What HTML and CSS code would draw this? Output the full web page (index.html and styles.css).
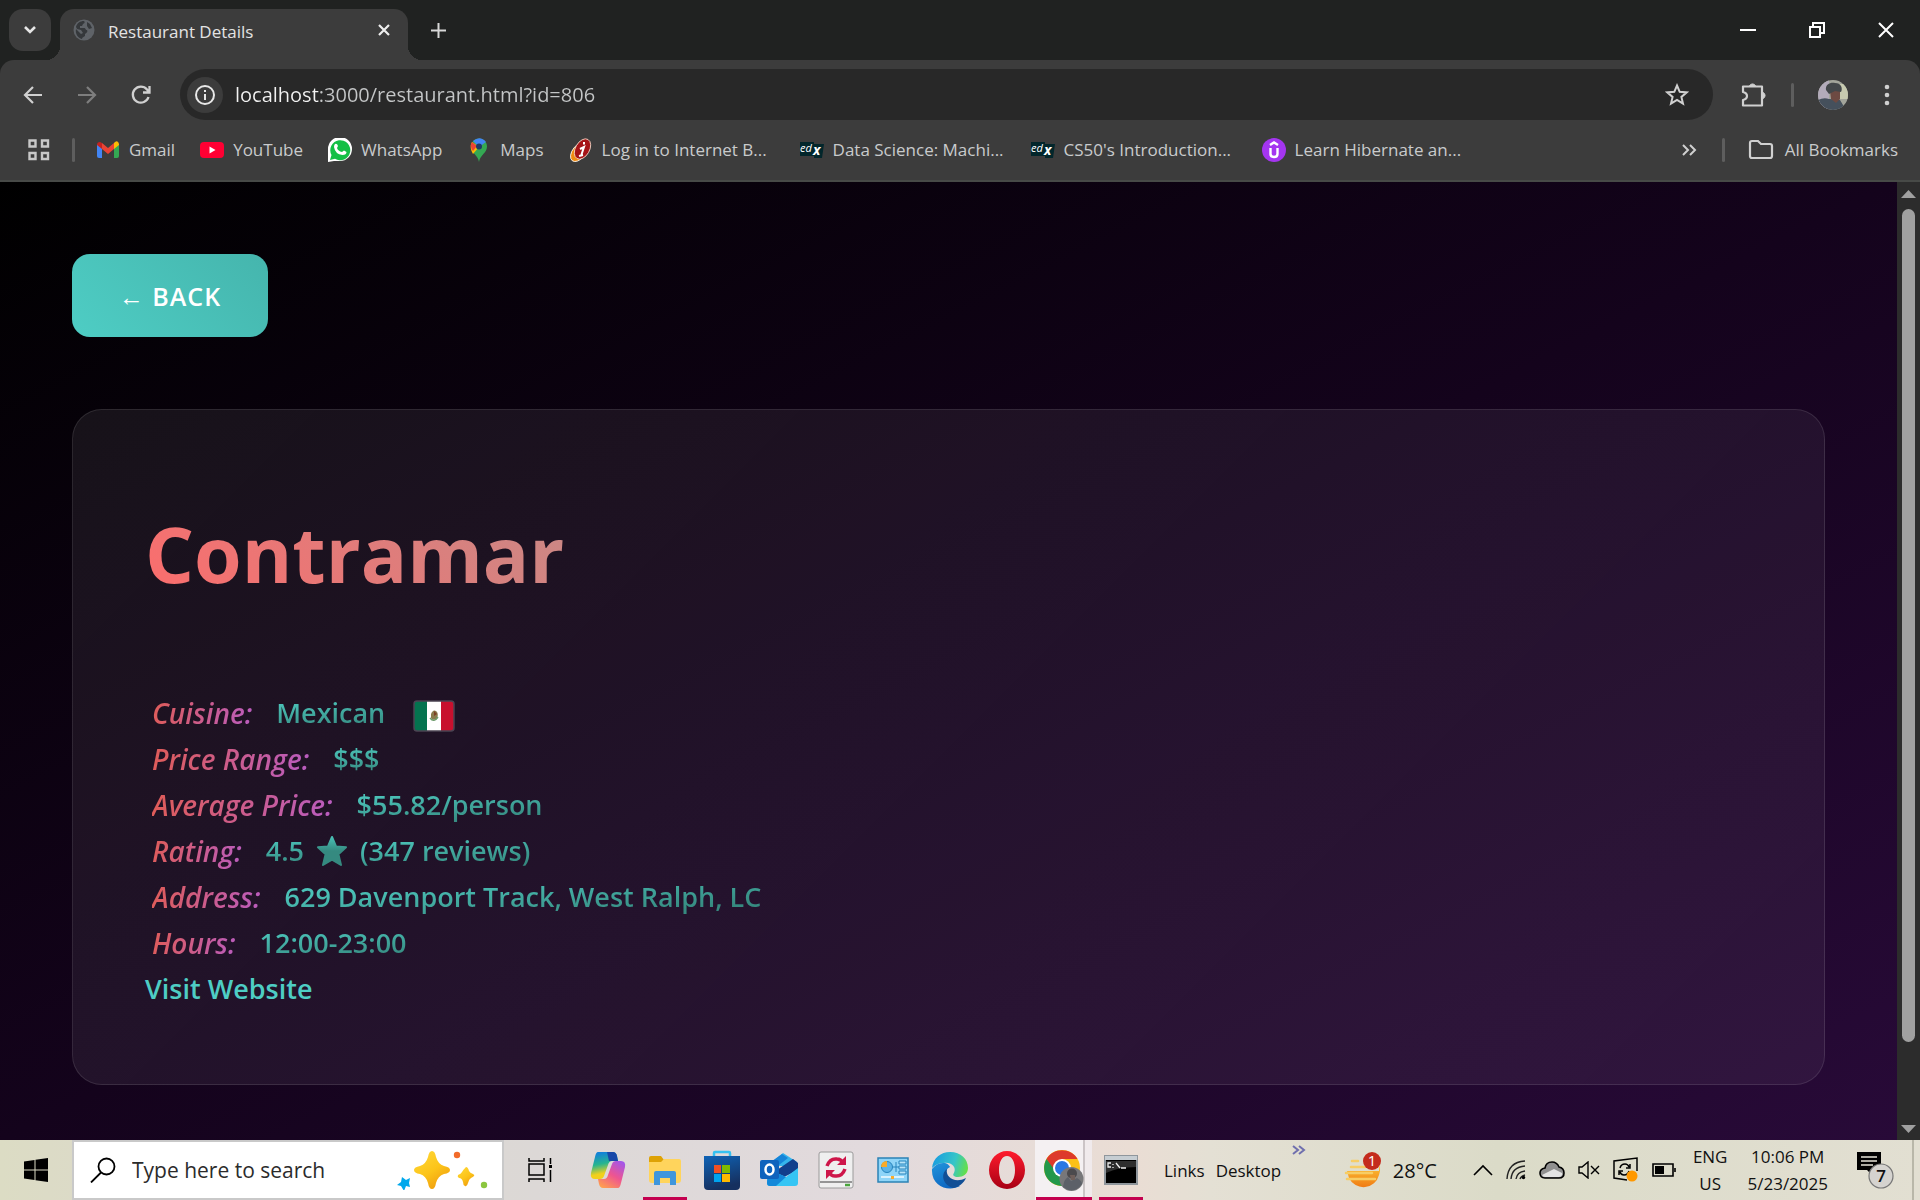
FILE: index.html
```html
<!DOCTYPE html>
<html lang="en">
<head>
<meta charset="utf-8">
<title>Restaurant Details</title>
<link rel="stylesheet" href="styles.css">
</head>
<body>
<header class="browser">
  <div class="tabstrip">
    <button class="tab-search" aria-label="Search tabs"><svg width="14" height="10" viewBox="0 0 14 10"><path d="M2 2l5 5 5-5" fill="none" stroke="#e6e6e6" stroke-width="2.6"/></svg></button>
    <div class="tab">
      <svg width="22" height="22" viewBox="0 0 22 22"><circle cx="11" cy="11" r="10.5" fill="#5f6368"/><path d="M3 8c1-4 4-6 8-6 1 1 1 2-1 3l-1 2H7v2h4c2 0 1 2 3 2 1 1 0 3-2 4v2c-1 1-3 1-3 3-4-1-7-5-6-10l5 5 2-1-2-3-4-1zM14 3l3 2 2 4-3 1-2-3z" fill="#35383b"/></svg>
      <span class="tab-title">Restaurant Details</span>
      <button class="tab-close" aria-label="Close tab"><svg width="14" height="14" viewBox="0 0 14 14"><path d="M2 2l10 10M12 2L2 12" stroke="#eee" stroke-width="2.2"/></svg></button>
    </div>
    <button class="new-tab" aria-label="New tab"><svg width="17" height="17" viewBox="0 0 17 17"><path d="M8.500 1v15M1 8.500h15" stroke="#d8d8d8" stroke-width="2"/></svg></button>
    <div class="window-controls">
      <button aria-label="Minimize"><svg width="16" height="16" viewBox="0 0 16 16"><path d="M0 8h16" stroke="#fff" stroke-width="2"/></svg></button>
      <button aria-label="Restore"><svg width="16" height="16" viewBox="0 0 16 16"><path d="M1 5h10v10H1zM4 4V1h11v10h-3" fill="none" stroke="#fff" stroke-width="2"/></svg></button>
      <button aria-label="Close"><svg width="16" height="16" viewBox="0 0 16 16"><path d="M1 1l14 14M15 1L1 15" stroke="#fff" stroke-width="2"/></svg></button>
    </div>
  </div>

  <div class="toolbar">
    <div class="nav">
      <button aria-label="Back"><svg width="20" height="20" viewBox="0 0 20 20"><path d="M19 10H2M10 2L2 10l8 8" fill="none" stroke="#d0d0d0" stroke-width="2.2"/></svg></button>
      <button aria-label="Forward"><svg width="20" height="20" viewBox="0 0 20 20"><path d="M1 10h17M10 2l8 8-8 8" fill="none" stroke="#7e7e7e" stroke-width="2.2"/></svg></button>
      <button aria-label="Reload"><svg width="20" height="20" viewBox="0 0 20 20"><path d="M17.500 12A8 8 0 1 1 16 4.500L18 7M18.500 1v6.500H12" fill="none" stroke="#d0d0d0" stroke-width="2.3"/></svg></button>
    </div>
    <div class="omnibox">
      <button class="site-info" aria-label="Site information"><svg width="22" height="22" viewBox="0 0 22 22"><circle cx="11" cy="11" r="9" fill="none" stroke="#e8e8e8" stroke-width="2"/><path d="M11 10v6M11 6v2" stroke="#e8e8e8" stroke-width="2"/></svg></button>
      <input class="url" type="text" aria-label="Address" value="localhost:3000/restaurant.html?id=806">
      <button aria-label="Bookmark this page"><svg width="24" height="24" viewBox="0 0 24 24"><path d="M12 2.500l2.700 6.300 6.900.6-5.200 4.500 1.600 6.700-6-3.600-6 3.600 1.600-6.700-5.200-4.500 6.900-.6z" fill="none" stroke="#d0d0d0" stroke-width="2"/></svg></button>
    </div>
    <button class="ext" aria-label="Extensions"><svg width="26" height="26" viewBox="0 0 26 26"><path d="M2 4.500h19v19H2v-5.500q4-1 4-4t-4-4z" fill="none" stroke="#d0d0d0" stroke-width="2.200" stroke-linejoin="round"/><path d="M8.500 4a3.200 3.200 0 0 1 6 0zM22 10.500a3.200 3.200 0 0 1 0 6z" fill="#d0d0d0" stroke="#d0d0d0"/></svg></button>
    <span class="rule"></span>
    <button class="profile" aria-label="Profile"><svg width="30" height="30" viewBox="0 0 30 30"><defs><clipPath id="av"><circle cx="15" cy="15" r="15"/></clipPath></defs><g clip-path="url(#av)"><path d="M0 0h30v30H0z" fill="#a3a59b"/><path d="M0 0h11v30H0z" fill="#b3abba"/><path d="M21 4h9v15h-9z" fill="#c7cab0"/><path d="M0 20q6-3 11-1 7 0 11 1l6 10H2z" fill="#45505c"/><path d="M12 11h10l0 8-4 4-5-4z" fill="#6d4a42"/><path d="M8 10c-1-6 5-8 9-7 6 0 8 5 6 9l-6-1-6 3z" fill="#43474a"/></g></svg></button>
    <button class="menu" aria-label="Menu"><svg width="6" height="24" viewBox="0 0 6 24"><g fill="#d0d0d0"><circle cx="3" cy="4" r="2.300"/><circle cx="3" cy="12" r="2.300"/><circle cx="3" cy="20" r="2.300"/></g></svg></button>
  </div>

  <nav class="bookmarks">
    <button class="apps" aria-label="Apps"><svg width="22" height="22" viewBox="0 0 22 22"><path d="M1.500 1.500h6v6h-6zM14 1.500h6v6h-6zM1.500 14h6v6h-6zM14 14h6v6h-6z" fill="none" stroke="#c8c8c8" stroke-width="2.400"/></svg></button>
    <span class="rule"></span>
    <div class="marks">
      <a href="#"><svg width="24" height="24" viewBox="0 0 24 24"><path d="M1 6v12q0 2 2 2h3V9z" fill="#4285f4"/><path d="M18 9v11h3q2 0 2-2V6z" fill="#34a853"/><path d="M18 5v6l5-4V6q-1-4-4-2z" fill="#fbbc04"/><path d="M6 5l6 5 6-5v6l-6 5-6-5z" fill="#ea4335"/><path d="M1 7l5 4V5L4 4Q1 4 1 7z" fill="#c5221f"/></svg><span>Gmail</span></a>
      <a href="#"><svg width="24" height="24" viewBox="0 0 24 24"><rect y="4" width="24" height="16" rx="4" fill="#ff0033"/><path d="M9.500 8.500v7l6-3.500z" fill="#fff"/></svg><span>YouTube</span></a>
      <a href="#"><svg width="24" height="24" viewBox="0 0 24 24"><path d="M0 24V11a12 12 0 1 1 12 12H6z" fill="#fff"/><path d="M2 22l1.500-5A10 10 0 1 1 7 20.700z" fill="#13bf45"/><path d="M7 6q2-1 3 2l-1 2q1 3 5 4l2-1.500 2.500 1.500q0 3-4 3Q7 16 6 9 6 7 7 6z" fill="#fff"/></svg><span>WhatsApp</span></a>
      <a href="#"><svg width="24" height="24" viewBox="0 0 24 24"><path d="M4 8.500C4 4 8 .5 12 .5c4.500 0 8 3.500 8 8C20 15 13 17 12 24 11 17 4 15 4 8.500z" fill="#34a853"/><path d="M5 4l7 5-6 7Q2 9 5 4z" fill="#fbbc04"/><path d="M5 4l5 4-4 5Q2 8 5 4z" fill="#ea4335"/><path d="M6 3q7-6 13 1l-7 5z" fill="#4285f4"/><circle cx="12" cy="8.500" r="3" fill="#1f3a66"/></svg><span>Maps</span></a>
      <a href="#" class="long"><svg width="24" height="24" viewBox="0 0 24 24"><ellipse cx="10" cy="14" rx="6.500" ry="11" transform="rotate(38 10 14)" fill="#f08a10" stroke="#fff" stroke-width=".8"/><ellipse cx="13.500" cy="11" rx="7" ry="11" transform="rotate(30 13.500 11)" fill="#a51417" stroke="#f5d9c8" stroke-width=".8"/><path d="M11 11l4-2-3 9M10 18l4-1M15 4v2.500" fill="none" stroke="#fff" stroke-width="2"/></svg><span>Log in to Internet B...</span></a>
      <a href="#" class="long"><svg width="24" height="24" viewBox="0 0 24 24"><path d="M0 4h14v2h10l-2 14h-8v-2H0z" fill="#02262b"/><text x="0" y="14" class="edx">ed</text><text x="13" y="17" class="edx big">x</text></svg><span>Data Science: Machi...</span></a>
      <a href="#" class="long"><svg width="24" height="24" viewBox="0 0 24 24"><path d="M0 4h14v2h10l-2 14h-8v-2H0z" fill="#02262b"/><text x="0" y="14" class="edx">ed</text><text x="13" y="17" class="edx big">x</text></svg><span>CS50's Introduction...</span></a>
      <a href="#" class="long"><svg width="24" height="24" viewBox="0 0 24 24"><circle cx="12" cy="12" r="12" fill="#a435f0"/><path d="M8 7l4-2.500L16 7M8.500 10v6q0 3 3.500 3t3.500-3v-6" fill="none" stroke="#fff" stroke-width="2.400"/></svg><span>Learn Hibernate an...</span></a>
    </div>
    <button class="more" aria-label="More bookmarks"><svg width="16" height="14" viewBox="0 0 16 14"><path d="M2 2l5 5-5 5M9 2l5 5-5 5" fill="none" stroke="#d0d0d0" stroke-width="2"/></svg></button>
    <span class="rule"></span>
    <a href="#" class="all"><svg width="26" height="22" viewBox="0 0 26 22"><path d="M2 4q0-2 2-2h6l3 3h9q2 0 2 2v10q0 2-2 2H4q-2 0-2-2z" fill="none" stroke="#d0d0d0" stroke-width="2.200"/></svg><span>All Bookmarks</span></a>
  </nav>
</header>

<div class="viewport">
  <main class="page">
    <button class="back">← BACK</button>
    <article class="card">
      <h1><span>Contramar</span></h1>
      <p class="row"><em>Cuisine:</em><span class="value">Mexican</span><svg class="flag" width="42" height="32" viewBox="0 0 42 32"><defs><clipPath id="fl"><rect x="1" y="1" width="40" height="30" rx="3"/></clipPath></defs><g clip-path="url(#fl)"><path d="M0 0h42v32H0z" fill="#fff"/><path d="M0 0h14v32H0z" fill="#04734f"/><path d="M28 0h14v32H28z" fill="#c8102e"/></g><path d="M18 14q2-5 5-3t1 8q-5 2-6-1z" fill="#8a7a4d"/><path d="M17 18q4 5 8-1" fill="none" stroke="#6c9b6b" stroke-width="1.500"/><path d="M21 11l3 3-3 2z" fill="#7b3f25"/><rect x="1" y="1" width="40" height="30" rx="3" fill="none" stroke="#4b4352" stroke-width="1.500"/></svg></p>
      <p class="row"><em>Price Range:</em><span class="value">$$$</span></p>
      <p class="row"><em>Average Price:</em><span class="value">$55.82/person</span></p>
      <p class="row"><em>Rating:</em><span class="value">4.5</span><svg class="star" width="32" height="32" viewBox="0 0 32 32"><defs><linearGradient id="sg" x2="0" y2="1"><stop stop-color="#4abfb5"/><stop offset=".5" stop-color="#358a80"/></linearGradient></defs><path d="M16 2l4 9.500 10 .8-7.600 7L25 30l-9-5.300L7 30l2.600-10.700-7.600-7 10-.8z" fill="url(#sg)" stroke="url(#sg)" stroke-width="2" stroke-linejoin="round"/></svg><span class="value">(347 reviews)</span></p>
      <p class="row"><em>Address:</em><span class="value">629 Davenport Track, West Ralph, LC</span></p>
      <p class="row"><em>Hours:</em><span class="value">12:00-23:00</span></p>
      <a class="visit" href="#">Visit Website</a>
    </article>
  </main>
  <div class="scrollbar">
    <svg width="15" height="8" viewBox="0 0 15 8"><path d="M7.500 0L15 8H0z" fill="#a0a0a0"/></svg>
    <span class="track"><span class="thumb"></span></span>
    <svg width="15" height="8" viewBox="0 0 15 8"><path d="M0 0h15L7.500 8z" fill="#a0a0a0"/></svg>
  </div>
</div>

<footer class="taskbar">
  <button class="start" aria-label="Start"><svg width="24" height="24" viewBox="0 0 24 24"><path d="M0 3.500l10.500-1.600v9.500H0zM11.500 1.700L24 0v11.400H11.500zM0 12.500h10.500V22L0 20.500zM11.500 12.500H24V24l-12.500-1.800z"/></svg></button>
  <label class="search">
    <svg width="26" height="26" viewBox="0 0 26 26"><circle cx="16.500" cy="9.500" r="8" fill="none" stroke="#000" stroke-width="1.800"/><path d="M11 15.500L1 25.500" stroke="#000" stroke-width="1.800"/></svg>
    <input type="search" placeholder="Type here to search" aria-label="Type here to search">
    <svg width="94" height="40" viewBox="0 0 94 40"><defs><linearGradient id="gold" x2=".6" y2="1"><stop stop-color="#ffd93b"/><stop offset=".6" stop-color="#fcc419"/><stop offset="1" stop-color="#f0a010"/></linearGradient></defs><path d="M36 1q3 0 4 6 2 7 8 9 6 1 6 4t-6 4q-6 2-8 9-1 6-4 6t-4-6q-2-7-8-9-6-1-6-4t6-4q6-2 8-9 1-6 4-6z" fill="url(#gold)"/><path d="M70 17q2 0 3 4 1 2 4 3 2 1 1 2t-3 2-3 5-3 3-2-4q-1-4-4-4-2-1-1-3 3-1 4-3t4-5z" fill="url(#gold)"/><path d="M6 27l4 3 4-2-1 5 1 4-4-1-2 5-3-5-4-1 4-3z" fill="#00a8ec"/><circle cx="61" cy="5" r="3.200" fill="#f26b2a"/><circle cx="88" cy="35" r="3.200" fill="#8bc63f"/></svg>
  </label>
  <button class="slot view" aria-label="Task view"><svg width="26" height="26" viewBox="0 0 26 26"><path d="M2 1v3h15V1M2 25v-3h15v3M2 7h15v11H2zM23.500 1v6M23.500 13v12" fill="none" stroke="#000" stroke-width="1.500"/><path d="M22 8h3v3h-3z"/></svg></button>
  <div class="apps-row">
    <button class="slot" aria-label="Copilot"><svg width="38" height="38" viewBox="0 0 38 38"><defs><linearGradient id="c1" x2=".2" y2="1"><stop offset=".1" stop-color="#1282d8"/><stop offset=".5" stop-color="#27b58f"/><stop offset=".85" stop-color="#f2d01c"/></linearGradient><linearGradient id="c2" x1=".8" x2=".2" y2="1"><stop stop-color="#a456e8"/><stop offset=".5" stop-color="#ee5590"/><stop offset="1" stop-color="#ff9e50"/></linearGradient></defs><path d="M9 1h15q3 0 4 4l1 5h-6q-3 0-4 4l-4 11q-1 3-4 3H6q-5 0-4-6L6 6q1-5 3-5z" fill="url(#c1)"/><path d="M18 1h6q3 0 4 4l1 5h-9z" fill="#1748a8"/><path d="M29 37H14q-3 0-4-4l-1-5h6q3 0 4-4l4-11q1-3 4-3h5q5 0 4 6l-4 16q-1 5-3 5z" fill="url(#c2)"/></svg></button>
    <button class="slot on" aria-label="File Explorer"><svg width="34" height="32" viewBox="0 0 34 32"><path d="M1 4q0-2 2-2h10l3 4v4H1z" fill="#dea206"/><path d="M1 8h12l3-3h15q2 0 2 2v19q0 3-3 3H4q-3 0-3-3z" fill="#ffd45c"/><path d="M6 31V19q0-2 2-2h18q2 0 2 2v12h-6v-7H12v7z" fill="#3f96dc"/></svg></button>
    <button class="slot" aria-label="Store"><svg width="36" height="40" viewBox="0 0 36 40"><defs><linearGradient id="st" x2=".3" y2="1"><stop stop-color="#0f63b6"/><stop offset="1" stop-color="#16305f"/></linearGradient></defs><path d="M10 8V3q0-1 1-1h14q1 0 1 1v5" fill="none" stroke="#35c1f1" stroke-width="2.500"/><path d="M0 6h36v30q0 4-4 4H4q-4 0-4-4z" fill="url(#st)"/><path d="M10 15h7v8h-7z" fill="#f25022"/><path d="M18 15h8v8h-8z" fill="#7fba00"/><path d="M10 24h7v8h-7z" fill="#00a4ef"/><path d="M18 24h8v8h-8z" fill="#ffb900"/></svg></button>
    <button class="slot" aria-label="Outlook"><svg width="38" height="36" viewBox="0 0 38 36"><path d="M8 13L23 1l14 9v4H8z" fill="#35b4ec"/><path d="M8 12L22 2l6 4-18 14z" fill="#1684d8"/><path d="M14 20L33 7l5 4v7L20 27z" fill="#123f8c"/><path d="M8 17l18 8 12-9v15q0 3-3 3H10q-3 0-3-3z" fill="#36c5f4"/><path d="M8 17l18 8-10 9h-6q-3 0-3-3z" fill="#1388d9"/><rect y="8" width="19" height="19" rx="2" fill="#0f63bd"/><ellipse cx="9.500" cy="17.500" rx="4" ry="5" fill="none" stroke="#fff" stroke-width="2.500"/></svg></button>
    <button class="slot" aria-label="Sync"><svg width="36" height="38" viewBox="0 0 36 38"><rect x="1" y="1" width="34" height="36" rx="2" fill="#efefef" stroke="#9a9a9a"/><path d="M2 31h32" stroke="#777" stroke-width="1.500"/><path d="M27 34h5" stroke="#4aa53c" stroke-width="2.500"/><path d="M9 15q3-8 10-7 4 0 6 4M27 18q-3 8-10 7-4 0-6-4" fill="none" stroke="#ce164a" stroke-width="3.500"/><path d="M28 5v9h-9zM8 28v-9h9z" fill="#ce164a"/></svg></button>
    <button class="slot" aria-label="Control Panel"><svg width="32" height="26" viewBox="0 0 32 26"><rect x="1" y="1" width="30" height="24" fill="#8fd5f8" stroke="#2b83b5" stroke-width="1.500"/><circle cx="10" cy="10" r="5.500" fill="#5db4e6" stroke="#2684bd"/><path d="M10 10V4q-6 0-6 6z" fill="#f8ab2a"/><path d="M16 10h6M19 5v10M22 4h7v3h-7zM22 9h7v3h-7zM22 14h7v3h-7z" fill="#b9e4f8" stroke="#2684bd"/><path d="M4 20h23" stroke="#d9f2fd" stroke-width="2"/><path d="M14 19h3v3h-3z" fill="#f8ab2a"/></svg></button>
    <button class="slot" aria-label="Edge"><svg width="38" height="38" viewBox="0 0 38 38"><defs><linearGradient id="e1" y1=".4" y2=".6"><stop stop-color="#1a9de0"/><stop offset=".6" stop-color="#36c5c8"/><stop offset="1" stop-color="#66e044"/></linearGradient><linearGradient id="e2" x2=".5" y2="1"><stop stop-color="#2196dc"/><stop offset="1" stop-color="#0d66c2"/></linearGradient></defs><path d="M1 17C2 7 10 1 19 1c11 0 18 7 18 16 0 6-5 9-10 9-4 0-6-2-4-4 3-6-3-11-10-10C7 12 3 15 1 17z" fill="url(#e1)"/><path d="M1 18q5-7 13-6c4 1 5 4 5 4-8 4-6 18 10 19-11 6-29 1-28-17z" fill="url(#e2)"/><path d="M16 18c-2 8 8 15 19 9-2 5-7 9-13 10-10-3-13-14-6-19z" fill="#124f96"/></svg></button>
    <button class="slot" aria-label="Opera"><svg width="36" height="38" viewBox="0 0 36 38"><defs><linearGradient id="op" x2="0" y2="1"><stop stop-color="#ff1b2d"/><stop offset="1" stop-color="#a70014"/></linearGradient></defs><path d="M18 0a18 19 0 1 0 0 38 18 19 0 1 0 0-38zm0 5c5 0 8 6 8 14s-3 14-8 14-8-6-8-14 3-14 8-14z" fill="url(#op)" fill-rule="evenodd"/></svg></button>
    <button class="slot on current" aria-label="Chrome"><svg width="40" height="44" viewBox="0 0 40 44"><circle cx="18" cy="20" r="18" fill="#fbc116"/><path d="M2.500 11A18 18 0 0 1 33.500 11H18l-8 13z" fill="#dd3a2b"/><path d="M2.500 11A18 18 0 0 0 18 38l8-13-14-1z" fill="#22984a"/><circle cx="18" cy="20" r="9" fill="#fff"/><circle cx="18" cy="20" r="7" fill="#2a78e4"/><circle cx="27.500" cy="31" r="12" fill="#77777a"/><path d="M19 39q1-8 5-10l3 4 6-3q5 3 5 6-8 11-19 3z" fill="#5c6068"/><ellipse cx="28" cy="25.500" rx="5" ry="5" fill="#4b4a4d"/><path d="M26 27h5v5h-4z" fill="#6f5f5a"/></svg></button>
    <button class="slot on" aria-label="Command Prompt"><svg width="34" height="30" viewBox="0 0 34 30"><rect x="1" y="1" width="32" height="28" fill="#000" stroke="#8f969c" stroke-width="2"/><path d="M1 1h32v4H1z" fill="#c6cdd2"/><path d="M2 6h30v6Q14 12 2 18z" fill="#2e2e2e"/><path d="M7 8H4v4h3M9 9v1M9 12v1M12 8l4 5M17 13h5" fill="none" stroke="#eee" stroke-width="1.300"/></svg></button>
  </div>
  <div class="toolbars"><a href="#">Links</a><a href="#">Desktop</a><svg class="chev" width="14" height="10" viewBox="0 0 14 10"><path d="M1 1l5 4-5 4M7 1l5 4-5 4" fill="none" stroke="#6f6fae" stroke-width="2"/></svg></div>
  <a href="#" class="weather"><svg width="38" height="38" viewBox="0 0 38 38"><defs><linearGradient id="su" x2="0" y2="1"><stop stop-color="#fcc336"/><stop offset="1" stop-color="#f07b14"/></linearGradient></defs><path d="M3 20h32V14q2 4 0 10a16 16 0 0 1-30 3z" fill="url(#su)"/><path d="M8 10h6M7 16h14M2 22h26M3 28h28" stroke="#f7cd65" stroke-width="2.500" stroke-linecap="round"/><circle cx="28" cy="10" r="9" fill="#c42b1c"/><text x="28" y="15" class="count">1</text></svg><span>28°C</span></a>
  <div class="tray">
    <svg width="20" height="12" viewBox="0 0 20 12"><path d="M1 11l9-9 9 9" fill="none" stroke="#000" stroke-width="1.600"/></svg>
    <svg width="20" height="20" viewBox="0 0 20 20"><path d="M1 19Q2 2 19 1M5 19Q6 7 19 6M10 19q1-7 9-8M14 19q1-3 5-4" fill="none" stroke="#222" stroke-width="1.400"/><circle cx="17.500" cy="17.500" r="1.700"/></svg>
    <svg width="26" height="18" viewBox="0 0 26 18"><path d="M6 17q-5 0-5-5 0-4 5-5 1-6 7-6 5 0 7 5 5 1 5 6 0 5-5 5z" fill="#909090" stroke="#000" stroke-width="1.600"/><path d="M3 14l12-6 8 4q1 3-3 4H6q-2 0-3-2z" fill="#e4e4e4"/></svg>
    <svg width="22" height="18" viewBox="0 0 22 18"><path d="M1 6h3l6-5v16l-6-5H1zM13 5l8 8M21 5l-8 8" fill="none" stroke="#000" stroke-width="1.400"/></svg>
    <svg width="26" height="26" viewBox="0 0 26 26"><path d="M14 23L1 21V4l23-3v13" fill="none" stroke="#000" stroke-width="1.500"/><path d="M7 11q1-4 5-4 3 0 4 3M17 7v4h-4M16 14q-1 4-5 4-3 0-4-3M6 18v-4h4" fill="none" stroke="#000" stroke-width="1.500"/><circle cx="19" cy="19" r="5.500" fill="#ff9800"/></svg>
    <svg width="24" height="14" viewBox="0 0 24 14"><path d="M1 1h20v12H1zM23 5v4" fill="none" stroke="#000" stroke-width="1.600"/><path d="M3 3h9v8H3z"/></svg>
  </div>
  <div class="lang"><span>ENG</span><span>US</span></div>
  <div class="clock"><span>10:06 PM</span><span>5/23/2025</span></div>
  <button class="notes" aria-label="Notifications"><svg width="38" height="38" viewBox="0 0 38 38"><path d="M1 1h24v18h-8v6l-6-6H1z"/><path d="M5 6h16M5 10h16M5 14h12" stroke="#e6e4d8" stroke-width="1.300"/><circle cx="25" cy="25" r="12" fill="#d5d3cf" stroke="#777" stroke-width="1.200"/><text x="25" y="31" class="count dark">7</text></svg></button>
</footer>
</body>
</html>
```
FILE: styles.css
```css
* { box-sizing: border-box; }

body {
  margin: 0;
  height: 100vh;
  display: flex;
  flex-direction: column;
  overflow: hidden;
  font-family: "Open Sans", "Noto Sans", sans-serif;
}

button {
  display: flex;
  align-items: center;
  justify-content: center;
  padding: 0;
  border: 0;
  background: none;
  font: inherit;
}

a { color: inherit; text-decoration: none; }
svg { display: block; flex: none; }
input { min-width: 0; border: 0; outline: 0; font: inherit; }

/* Browser frame */
.browser { flex: none; background: #202221; color: #c9cbcc; }

.tabstrip {
  display: flex;
  align-items: center;
  height: 60px;
  padding-left: 9px;
}
.tab-search {
  width: 42px;
  height: 42px;
  border-radius: 14px;
  background: #3c3c3c;
}
.tab {
  position: relative;
  display: flex;
  align-items: center;
  align-self: flex-end;
  gap: 13px;
  width: 348px;
  height: 51px;
  margin-left: 9px;
  padding: 0 12px 9px 13px;
  border-radius: 14px 14px 0 0;
  background: #3c3c3c;
  color: #e3e3e3;
}
.tab::before, .tab::after {
  content: "";
  position: absolute;
  bottom: 0;
  width: 14px;
  height: 14px;
}
.tab::before { left: -14px; background: radial-gradient(circle at 0 0, transparent 14px, #3c3c3c 14px); }
.tab::after { right: -14px; background: radial-gradient(circle at 100% 0, transparent 14px, #3c3c3c 14px); }
.tab-title { flex: 1; font-size: 17px; line-height: 24px; padding-top: 3px; }
.tab-close { width: 24px; height: 24px; }
.new-tab { width: 60px; height: 60px; }
.window-controls { display: flex; margin-left: auto; }
.window-controls button { width: 69px; height: 60px; }

.toolbar {
  display: flex;
  align-items: center;
  height: 60px;
  padding: 9px 18px 0 12px;
  border-radius: 14px 14px 0 0;
  background: #3c3c3c;
}
.nav { display: flex; width: 168px; gap: 12px; }
.nav button { width: 42px; height: 42px; }
.omnibox {
  display: flex;
  align-items: center;
  flex: 1;
  height: 51px;
  padding: 0 24px 0 7px;
  border-radius: 26px;
  background: #282828;
}
.site-info { width: 36px; height: 36px; border-radius: 18px; background: #3c3c3c; }
.url {
  flex: 1;
  height: 36px;
  margin-left: 12px;
  padding: 0;
  font-size: 20px;
  color: transparent;
  background: linear-gradient(90deg, #f2f2f2 84px, #c4c6c7 84px);
  -webkit-background-clip: text;
  background-clip: text;
}
.ext { width: 40px; margin-left: 21px; }
.rule { width: 3px; height: 24px; border-radius: 2px; background: #5e5e5e; }
.toolbar .rule { margin-left: 17px; }
.profile { margin-left: 24px; }
.menu { width: 30px; margin-left: 24px; }

.bookmarks {
  display: flex;
  align-items: center;
  height: 62px;
  padding: 0 22px 0 28px;
  border-bottom: 2px solid #474a47;
  background: #3c3c3c;
  font-size: 17px;
  line-height: 24px;
}
.apps { margin-right: 22px; }
.marks { display: flex; flex: 1; gap: 25px; margin-left: 21px; }
.marks a, .all { display: flex; align-items: center; gap: 9px; white-space: nowrap; }
.marks .long { width: 206px; }
.more { margin-right: 25px; }
.all { margin-left: 23px; gap: 11px; }
.edx { font: italic 11px "Open Sans", sans-serif; fill: #fff; }
.edx.big { font-size: 14px; font-weight: 700; }

/* Web page */
.viewport { display: flex; flex: 1; min-height: 0; }
.page {
  flex: 1;
  padding: 72px;
  overflow: hidden;
  background: linear-gradient(to bottom right, #000 0%, #14031c 50%, #280a38 100%);
}
.back {
  width: 196px;
  height: 83px;
  border-radius: 18px;
  background: linear-gradient(45deg, #4ecdc4, #45b5ad);
  color: #fff;
  font-size: 25px;
  font-weight: 600;
  letter-spacing: 1px;
}
.card {
  margin-top: 72px;
  padding: 72px;
  border: 1px solid rgba(255, 255, 255, .1);
  border-radius: 30px;
  background: linear-gradient(135deg, rgba(255, 255, 255, .07), rgba(255, 255, 255, .05));
  font-size: 27px;
  line-height: 46px;
  font-weight: 600;
}
h1 {
  margin: 0 0 64px;
  font-size: 77px;
  line-height: 144px;
  font-weight: 700;
  color: transparent;
  background: linear-gradient(45deg, #ff6b6b, #4ecdc4);
  -webkit-background-clip: text;
  background-clip: text;
}
.row { display: flex; align-items: center; margin: 0; padding-left: 7px; }
.row em, .value {
  color: transparent;
  -webkit-background-clip: text;
  background-clip: text;
}
.row em {
  padding-right: 4px;
  margin-right: 20px;
  font-size: 28px;
  background-image: linear-gradient(100deg, #e05c56, #b85cc4);
}
.value { background-image: linear-gradient(175deg, #4bc2b8 25%, #368a80 80%); }
.flag { margin: 6px 0 0 28px; }
.star { margin: 0 12px; }
.visit { display: block; color: #4ecdc4; }

.scrollbar {
  display: flex;
  flex-direction: column;
  align-items: center;
  width: 23px;
  padding: 8px 0 7px;
  background: #2c2c2c;
}
.track { flex: 1; padding: 11px 0; }
.thumb { display: block; width: 13px; height: 92%; border-radius: 7px; background: #a0a0a0; }

/* Taskbar */
.taskbar {
  display: flex;
  align-items: stretch;
  flex: none;
  height: 60px;
  padding-right: 6px;
  background: linear-gradient(90deg, #dcdcc4 0%, #dcdac8 5%, #dcd8d6 28%, #e2dadd 45%, #eaddd4 59%, #e4e0d4 63%, #dbdbc8 78%, #e2dfd2 100%);
  color: #111;
}
.start { width: 72px; }
.search {
  display: flex;
  align-items: center;
  width: 432px;
  padding: 0 12px 0 16px;
  border: 2px solid #c9c9c9;
  background: #fff;
}
.search input { flex: 1; margin-left: 16px; padding: 0; background: none; font-size: 21px; }
.search input::placeholder { color: #2b2b2b; opacity: 1; }
.slot { width: 57px; border: solid transparent; border-width: 3px 0; background-clip: padding-box; }
.view { width: 75px; padding-right: 4px; }
.apps-row { display: flex; }
.on { background: linear-gradient(#c4004f, #c4004f) bottom / 44px 3px no-repeat border-box; }
.current {
  background: linear-gradient(#c4004f, #c4004f) bottom / 56px 3px no-repeat border-box, linear-gradient(90deg, #f4f0f2 48px, #cbc4c6 48px, #cbc4c6 50px, #f0eaec 50px) border-box;
}
.toolbars { display: flex; align-items: center; gap: 11px; margin-left: 15px; font-size: 17px; }
.chev { align-self: flex-start; margin-top: 5px; }
.weather { display: flex; align-items: center; gap: 11px; margin-left: auto; font-size: 20px; }
.tray { display: flex; align-items: center; gap: 13px; margin-left: 36px; }
.lang, .clock {
  display: flex;
  flex-direction: column;
  align-items: center;
  justify-content: center;
  font-size: 17px;
  line-height: 27px;
}
.lang { margin-left: 17px; }
.clock { margin-left: 20px; }
.notes { width: 86px; border-right: 2px solid #b9b7a9; padding-left: 10px; }
.count { font: 15px "Open Sans", sans-serif; fill: #fff; text-anchor: middle; }
.count.dark { font-size: 17px; font-weight: 600; fill: #111; }
```
